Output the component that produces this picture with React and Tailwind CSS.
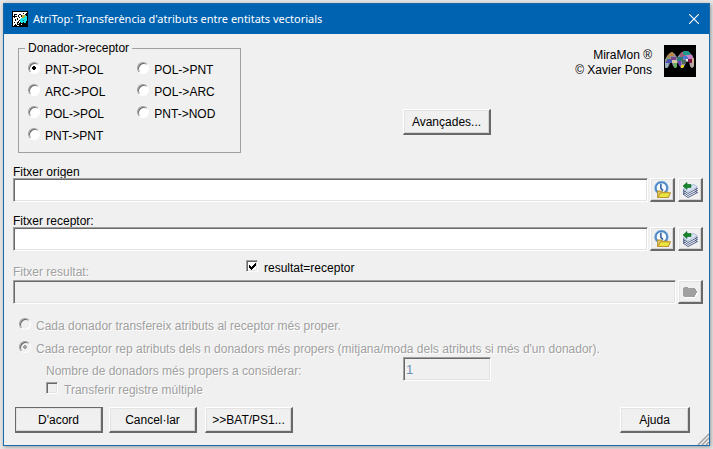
import { useState } from 'react';

const raised = 'border-t border-l border-b-2 border-r-2 border-t-white border-l-white border-b-[#696969] border-r-[#696969] bg-[#f0f0f0] shadow-[inset_1px_1px_0_#e3e3e3,inset_-1px_-1px_0_#d4d4d4]';
const sunken = 'border border-t-[#a0a0a0] border-l-[#a0a0a0] border-b-white border-r-white shadow-[inset_1px_1px_0_#696969,inset_-1px_-1px_0_#e3e3e3]';
const disabledText = 'text-[#a0a0a0] [text-shadow:1px_1px_0_#fff]';

const leftModes = ['PNT->POL', 'ARC->POL', 'POL->POL', 'PNT->PNT'];
const rightModes = ['POL->PNT', 'POL->ARC', 'PNT->NOD'];

const AppIcon = () => (
  <svg className="w-4 h-4 shrink-0" viewBox="0 0 16 16" shapeRendering="crispEdges">
    <rect width="16" height="16" fill="#000" />
    <path d="M1 1h14v1h-1v1h-1v1h-1v1h-1v1h-1v1H9v1H8v1H7v1H6v1H5v1H4v1H3v1H2v1H1z" fill="#fff" />
    <path d="M2 3h3v1H2zM1 5h1V4h1v1h2v1H3v1H2V6H1zM6 4h1v2H6zM7 3h2v1H7zM9 4h1v2H9zM5 7h1v2H5zM7 6h1v1H7zM11 2h1v1h-1zM3 8h1v2H3zM2 11h1v1H2z" fill="#000" />
    <path d="M2 13h1v1H2zM4 12h1v2H4zM5 14h2v1H5zM7 10h1v2H7zM6 12h1v1H6zM9 13h1v1H9z" fill="#fff" />
    <path d="M12 4h2v1h1v5h-1v2h-2v-1h-1v1H9v-1H8V8h1V7h2V5h1z" fill="#1ee0e6" />
    <path d="M10 4h3v2h-1v1h-2z" fill="#c9b02c" />
    <path d="M11 9h1v1h-1z" fill="#087f90" />
  </svg>
);

const MiraMonLogo = () => (
  <svg className="w-8 h-8 shrink-0" viewBox="0 0 32 32">
    <defs>
      <clipPath id="arches">
        <path d="M1 22V15L3 11L6 8L8 7L11 9L13 13L15 10L18 7L21 6H24L28 10L30 14V21L28 23L26 21L25 17H22L21 20L19 23H17L15 20L14 17L13 19V22L11 23L9 21L8 18H6L5 21L3 23H2z" />
      </clipPath>
    </defs>
    <rect width="32" height="32" fill="#000" />
    <g clipPath="url(#arches)" shapeRendering="crispEdges">
      <rect width="32" height="32" fill="#8d8ea0" />
      <path d="M4 7h6v4H6v2H3z" fill="#b8864a" />
      <path d="M2 12h5v3H1z" fill="#8d9c6a" />
      <path d="M3 14h5v4H2z" fill="#4a55b0" />
      <path d="M7 12h5v3H7z" fill="#7b3f91" />
      <path d="M8 15h5v3H8z" fill="#d5cda1" />
      <path d="M10 18h3v5h-3z" fill="#64b458" />
      <path d="M1 18h3v5H1z" fill="#98b0bd" />
      <path d="M15 7h6v5h-5z" fill="#a25a78" />
      <path d="M19 6h7v4h-7z" fill="#1e998c" />
      <path d="M13 12h6v4h-6z" fill="#287a78" />
      <path d="M19 11h5v3h-5z" fill="#4778ce" />
      <path d="M23 10h6v4h-5z" fill="#c884c6" />
      <path d="M24 14h4v4h-4z" fill="#7c1242" />
      <path d="M28 13h3v5h-3z" fill="#cdb08c" />
      <path d="M26 18h4v5h-4z" fill="#b7a7a4" />
      <path d="M14 16h3v5h-3z" fill="#6d3fc0" />
      <path d="M18 15h4v4h-4z" fill="#51685c" />
      <path d="M17 20h3v3h-3z" fill="#ecd020" />
      <path d="M12 10h2v2h-2zM22 14h2v2h-2z" fill="#e8edf3" />
    </g>
  </svg>
);

const RecentIcon = () => (
  <svg className="w-[17px] h-[17px]" viewBox="0 0 16 16">
    <circle cx="7" cy="6.5" r="5.5" fill="#f5fbff" stroke="#4b86c5" strokeWidth="2" />
    <circle cx="7" cy="6.5" r="6.5" fill="none" stroke="#9cc3e6" strokeWidth=".6" />
    <path d="M6.5 2.5V7L8.5 9" fill="none" stroke="#1d4c96" strokeWidth="1.3" />
    <path d="M3.5 15V9.5H7L8 10.5H13V12" fill="#f1dc7c" stroke="#b8912c" />
    <path d="M3.5 15.5L6 11H15.5L13.5 15.5z" fill="#ebe33e" stroke="#bd9530" />
  </svg>
);

const LayersIcon = () => (
  <svg className="w-4 h-4" viewBox="0 0 16 16">
    <path d="M1 12L10 8.5L15.5 10.5L6 15.5z" fill="#fff" stroke="#394b78" strokeWidth=".9" />
    <path d="M1 10L10 6.5L15.5 8.5L6 13.5z" fill="#fff" stroke="#394b78" strokeWidth=".9" />
    <path d="M1 8L10 4.5L15.5 6.5L6 11.5z" fill="#fff" stroke="#394b78" strokeWidth=".9" />
    <path d="M1 7L8 3.5L12 2.5L15.5 5L6 10z" fill="#d8e4f5" stroke="#9baccb" strokeWidth=".7" />
    <path d="M1 4L5 .5V2.5H9V5.5H5V7.5z" fill="#16862b" stroke="#0b6420" strokeWidth=".6" />
  </svg>
);

const FolderIcon = () => (
  <svg className="w-4 h-4" viewBox="0 0 16 16" shapeRendering="crispEdges">
    <path d="M2 4h5v1h6v1h1v2h1v1h1v2h-1v1h-1v2H3v-1H2z" fill="#fff" />
    <path d="M1 4h1V3h4v1h7v1h1v2h1v2h-1v2h-1v2H2v-1H1z" fill="#a0a0a0" />
  </svg>
);

const CloseIcon = () => (
  <svg className="w-[10px] h-[10px]" viewBox="0 0 10 10">
    <path d="M0 0L10 10M10 0L0 10" stroke="#fff" strokeWidth="1.1" />
  </svg>
);

const Radio = ({ label, disabled, ...props }) => (
  <label className={`flex gap-[5px] leading-4 ${disabled ? disabledText : ''}`}>
    <input
      type="radio"
      disabled={disabled}
      className="appearance-none w-3 h-3 shrink-0 rounded-full border border-t-[#a0a0a0] border-l-[#a0a0a0] border-b-white border-r-white bg-white shadow-[inset_1px_1px_0_#696969] disabled:bg-[#f0f0f0] checked:bg-[radial-gradient(circle,#000_2px,transparent_2px)] disabled:checked:bg-[radial-gradient(circle,#a0a0a0_2px,transparent_2px)]"
      {...props}
    />
    {label}
  </label>
);

const CheckBox = ({ label, disabled, ...props }) => (
  <label className={`flex gap-[6px] leading-4 ${disabled ? disabledText : ''}`}>
    <span className="relative w-3 h-3 shrink-0">
      <input
        type="checkbox"
        disabled={disabled}
        className={`peer appearance-none block w-3 h-3 bg-white disabled:bg-[#f0f0f0] ${sunken}`}
        {...props}
      />
      <svg className="absolute inset-0 hidden peer-checked:block pointer-events-none" viewBox="0 0 12 12" shapeRendering="crispEdges">
        <path d="M3 5h1v1h1v1h1V6h1V5h1V4h1V3h1v3H9v1H8v1H7v1H6v1H5V9H4V8H3z" fill="#000" />
      </svg>
    </span>
    {label}
  </label>
);

const IconButton = ({ label, disabled, children }) => (
  <button
    type="button"
    aria-label={label}
    disabled={disabled}
    className={`w-[25px] h-6 shrink-0 flex items-center justify-center ${raised}`}
  >
    {children}
  </button>
);

const Button = ({ children, className = 'w-[88px]' }) => (
  <button type="button" className={`h-[26px] shrink-0 ${raised} ${className}`}>
    {children}
  </button>
);

const FileField = ({ id, label }) => (
  <div className="mb-[13px]">
    <label htmlFor={id} className="block leading-3">{label}</label>
    <div className="flex">
      <input id={id} type="text" className={`flex-1 min-w-0 h-6 px-1 bg-white ${sunken}`} />
      <div className="flex gap-[3px] ml-[2px]">
        <IconButton label="Recents"><RecentIcon /></IconButton>
        <IconButton label="Capes"><LayersIcon /></IconButton>
      </div>
    </div>
  </div>
);

const App = () => {
  const [mode, setMode] = useState('PNT->POL');
  const [sameFile, setSameFile] = useState(true);

  const modeRadio = (name) => (
    <Radio key={name} name="mode" label={name} checked={mode === name} onChange={() => setMode(name)} />
  );

  return (
    <div className="min-h-screen p-[3px] flex bg-[#e6e6e6] text-black text-[12px] font-['Liberation_Sans',Arial,sans-serif]">
      <div className="relative flex-1 min-w-0 flex flex-col border border-[#1c69a8] bg-[#f0f0f0] shadow-[1px_1px_4px_rgba(0,0,0,0.35)]">
        <header className="h-[30px] pl-2 pr-[10px] flex items-center bg-[#0063b1] text-white">
          <AppIcon />
          <h1 className="ml-[5px] text-[11px] font-['Noto_Sans',sans-serif]">
            AtriTop: Transferència d'atributs entre entitats vectorials
          </h1>
          <button type="button" aria-label="Tanca" className="ml-auto"><CloseIcon /></button>
        </header>

        <form className="pt-[6px] pl-[9px] pr-[6px] pb-3">
          <div className="flex mb-[13px]">
            <fieldset className="w-[223px] h-[113px] ml-[5px] pl-[9px] border border-[#a0a0a0]">
              <legend className="-ml-[3px] px-[3px] leading-4">Donador-&gt;receptor</legend>
              <div className="flex gap-8 pt-[6px]">
                <div className="flex flex-col gap-[6px]">{leftModes.map(modeRadio)}</div>
                <div className="flex flex-col gap-[6px]">{rightModes.map(modeRadio)}</div>
              </div>
            </fieldset>
            <div className="ml-[162px] pt-[69px]"><Button>Avançades...</Button></div>
            <div className="ml-auto mr-[7px] pt-[5px] flex items-start gap-3">
              <p className="pt-[3px] text-right leading-[15px]">
                MiraMon ®<br />
                © Xavier Pons
              </p>
              <MiraMonLogo />
            </div>
          </div>

          <FileField id="origin" label="Fitxer origen" />
          <FileField id="target" label="Fitxer receptor:" />

          <div className="-mt-1 h-5 flex">
            <label htmlFor="result" className={`w-[233px] self-end leading-4 ${disabledText}`}>Fitxer resultat:</label>
            <CheckBox
              label="resultat=receptor"
              checked={sameFile}
              onChange={(e) => setSameFile(e.target.checked)}
            />
          </div>
          <div className="flex gap-[2px]">
            <input id="result" type="text" disabled className={`flex-1 min-w-0 h-6 px-1 bg-[#f0f0f0] ${sunken}`} />
            <IconButton label="Obre" disabled><FolderIcon /></IconButton>
          </div>

          <div className="pt-[14px] pl-[6px] flex flex-col gap-[7px]">
            <Radio name="transfer" label="Cada donador transfereix atributs al receptor més proper." disabled />
            <Radio
              name="transfer"
              label="Cada receptor rep atributs dels n donadors més propers (mitjana/moda dels atributs si més d'un donador)."
              defaultChecked
              disabled
            />
          </div>
          <div className="pl-[33px]">
            <div className="flex items-end mb-px">
              <label htmlFor="count" className={`w-[357px] leading-5 ${disabledText}`}>
                Nombre de donadors més propers a considerar:
              </label>
              <input
                id="count"
                type="text"
                defaultValue="1"
                disabled
                className={`w-[88px] h-6 px-[2px] text-[13px] text-[#6d8fb5] bg-[#f0f0f0] ${sunken}`}
              />
            </div>
            <CheckBox label="Transferir registre múltiple" disabled />
          </div>

          <div className="mt-[9px] pl-[2px] pr-[13px] flex">
            <Button className="w-[88px] outline outline-[#696969] -outline-offset-1">D'acord</Button>
            <div className="ml-[6px] flex gap-2">
              <Button>Cancel·lar</Button>
              <Button>&gt;&gt;BAT/PS1...</Button>
            </div>
            <div className="ml-auto"><Button className="w-[70px]">Ajuda</Button></div>
          </div>
        </form>

        <svg className="absolute right-0 bottom-0 w-3 h-3" viewBox="0 0 12 12">
          <path d="M1 12L12 1M5 12L12 5M9 12L12 9" stroke="#a0a0a0" strokeWidth="1.5" />
        </svg>
      </div>
    </div>
  );
};

export default App;
